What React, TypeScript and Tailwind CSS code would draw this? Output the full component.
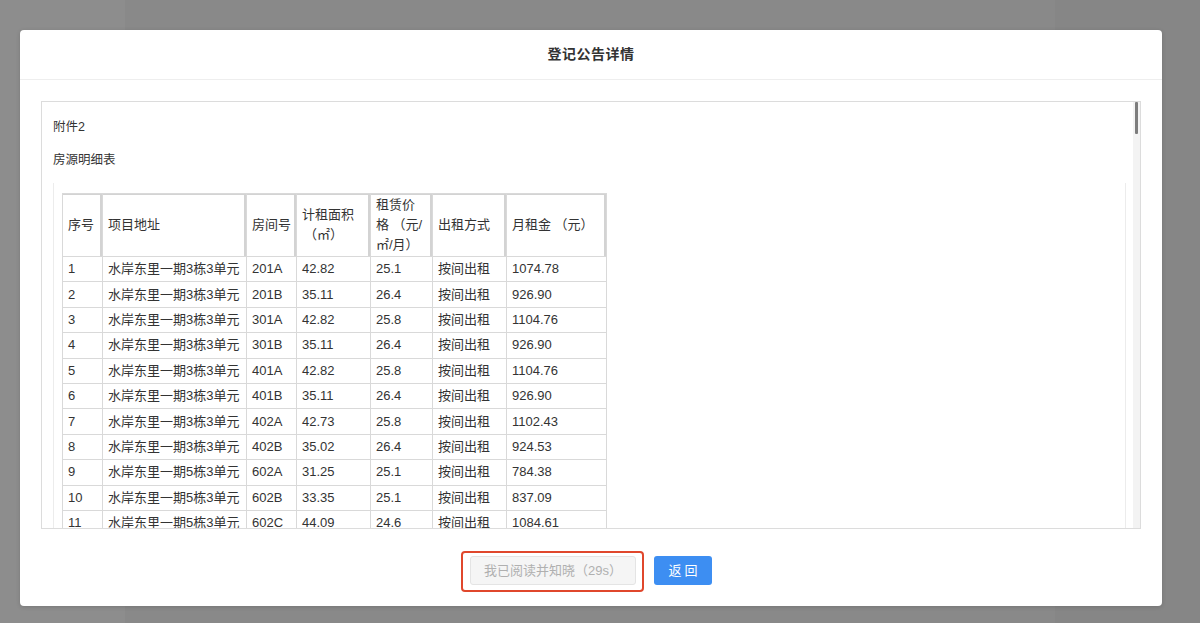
import React from 'react'

const rows = [
  ['1', '水岸东里一期3栋3单元', '201A', '42.82', '25.1', '按间出租', '1074.78'],
  ['2', '水岸东里一期3栋3单元', '201B', '35.11', '26.4', '按间出租', '926.90'],
  ['3', '水岸东里一期3栋3单元', '301A', '42.82', '25.8', '按间出租', '1104.76'],
  ['4', '水岸东里一期3栋3单元', '301B', '35.11', '26.4', '按间出租', '926.90'],
  ['5', '水岸东里一期3栋3单元', '401A', '42.82', '25.8', '按间出租', '1104.76'],
  ['6', '水岸东里一期3栋3单元', '401B', '35.11', '26.4', '按间出租', '926.90'],
  ['7', '水岸东里一期3栋3单元', '402A', '42.73', '25.8', '按间出租', '1102.43'],
  ['8', '水岸东里一期3栋3单元', '402B', '35.02', '26.4', '按间出租', '924.53'],
  ['9', '水岸东里一期5栋3单元', '602A', '31.25', '25.1', '按间出租', '784.38'],
  ['10', '水岸东里一期5栋3单元', '602B', '33.35', '25.1', '按间出租', '837.09'],
  ['11', '水岸东里一期5栋3单元', '602C', '44.09', '24.6', '按间出租', '1084.61'],
]

const widths = ['w-[40px]', 'w-[144px]', 'w-[50px]', 'w-[74px]', 'w-[62px]', 'w-[74px]', 'w-[100px]']

const th =
  'border border-[#d9d9d9] shadow-[inset_-2px_0_0_#d3d3d3,inset_0_1px_0_#d3d3d3] px-[5px] text-left font-normal leading-[20px]'

function HouseTable() {
  return (
    <table className="border-collapse table-fixed w-[544px] text-[13px] text-[#333]">
      <colgroup>
        {widths.map((w, i) => (
          <col key={i} className={w} />
        ))}
      </colgroup>
      <thead>
        <tr className="h-[63px]">
          <th className={th}>序号</th>
          <th className={th}>项目地址</th>
          <th className={th}>房间号</th>
          <th className={th}>
            计租面积
            <br />
            <span className="pl-[2px]">（㎡）</span>
          </th>
          <th className={th}>
            租赁价
            <br />
            格 （元/
            <br />
            ㎡/月）
          </th>
          <th className={th}>出租方式</th>
          <th className={th}>月租金 （元）</th>
        </tr>
      </thead>
      <tbody>
        {rows.map((r) => (
          <tr key={r[0]} className="h-[25.4px]">
            {r.map((c, i) => (
              <td key={i} className="border border-[#d9d9d9] px-[5px] leading-[16px] whitespace-nowrap overflow-hidden">
                {c}
              </td>
            ))}
          </tr>
        ))}
      </tbody>
    </table>
  )
}

export default function App() {
  return (
    <div
      className="relative w-[1200px] h-[623px] overflow-hidden flex"
      style={{ fontFamily: '"Liberation Sans", "Noto Sans CJK SC", sans-serif' }}
    >
      {/* dimmed page behind the dialog */}
      <div className="w-[125px] h-full bg-[#8d8d8d]" />
      <div className="flex-1 h-full bg-[#898989]" />
      <div className="w-[145px] h-full bg-[#868686]" />

      {/* dialog */}
      <div className="absolute left-[20px] top-[30px] w-[1142px] h-[576px] bg-white rounded-[4px] flex flex-col shadow-[0_1px_4px_rgba(0,0,0,0.15)]">
        <div className="h-[50px] shrink-0 border-b border-[#eeeeee] flex items-center justify-center">
          <h2 className="text-[14px] font-bold text-[#333] tracking-[0.5px]">登记公告详情</h2>
        </div>

        <div className="px-[21px] pt-[21px]">
          <div className="h-[428px] border border-[#dcdcdc] flex">
            <div className="flex-1 overflow-hidden pl-[11px] pr-[7px]">
              <p className="mt-[15px] text-[12.5px] leading-[20px] text-[#333]">附件2</p>
              <p className="mt-[13px] text-[12.5px] leading-[20px] text-[#333]">房源明细表</p>
              <div className="mt-[13px] h-[400px] border-l border-r border-[#ececec] pl-[8px] pt-[10px]">
                <HouseTable />
              </div>
            </div>
            <div className="w-[7px] shrink-0 bg-[#f3f3f3] pl-[2px]">
              <div className="w-[3px] h-[32px] bg-[#7d7d7d] rounded-[1px]" />
            </div>
          </div>
        </div>

        <div className="flex-1 flex items-center justify-center gap-[18px] pt-[6px]">
          <div className="relative">
            <button
              disabled
              className="w-[166px] h-[29px] bg-[#f5f5f5] border border-[#e4e4e4] rounded-[3px] text-[13px] text-[#b0b0b0]"
            >
              我已阅读并知晓（29s）
            </button>
            <span className="absolute -left-[9px] -right-[8px] -top-[5px] -bottom-[7px] border-2 border-[#e0472c] rounded-[4px] pointer-events-none" />
          </div>
          <button className="w-[58px] h-[29px] bg-[#3d8ef2] rounded-[3px] text-[13px] text-white tracking-[3px] pl-[3px]">
            返回
          </button>
        </div>
      </div>
    </div>
  )
}
